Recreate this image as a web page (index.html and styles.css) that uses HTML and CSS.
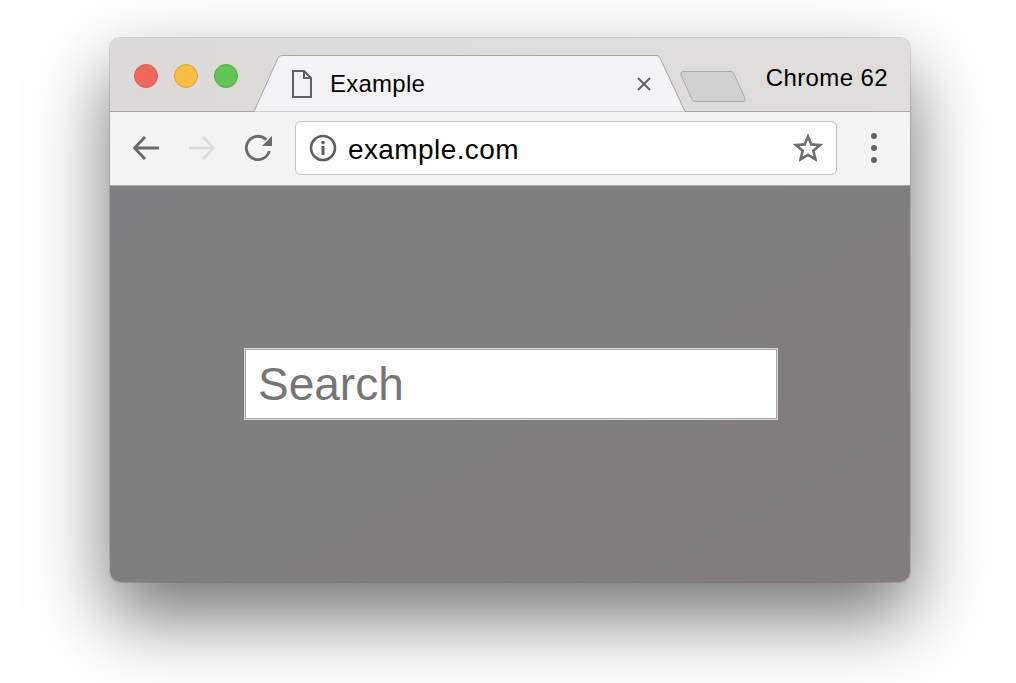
FILE: index.html
```html
<!DOCTYPE html>
<html>
<head>
    <title>Example</title>
    <link rel="stylesheet" href="styles.css">
</head>

<body>
    <div class="browserWindow">

        <div class="tabStrip">
            <div class="lights">
                <span class="light red"></span>
                <span class="light yellow"></span>
                <span class="light green"></span>
            </div>

            <div class="tab">
                <svg class="tabShape" width="432" height="57" viewBox="0 0 432 57">
                    <path d="M0 56.5 L24 3 Q25 0.5 28 0.5 L403 0.5 Q405 0.5 406 3 L431 56.5 H432" fill="#f3f3f5" stroke="#a6a6a6"/>
                </svg>
                <svg class="fileIcon" width="22" height="28" viewBox="0 0 22 28">
                    <path d="M2 1 H13 L20 8 V27 H2 Z M13 1 V8 H20" fill="none" stroke="#5f6064" stroke-width="2"/>
                </svg>
                <span class="tabTitle">Example</span>
                <svg class="closeIcon" width="16" height="16" viewBox="0 0 16 16">
                    <path d="M2 2 L14 14 M14 2 L2 14" stroke="#5f6064" stroke-width="2"/>
                </svg>
            </div>

            <svg class="newTab" width="66" height="31" viewBox="0 0 66 31">
                <path d="M3 0.5 H51 Q53 0.5 54 3 L65 27 Q66 30.5 63 30.5 H15 Q13 30.5 12 28.5 L1 4 Q0 0.5 3 0.5 Z" fill="#d2d1d1" stroke="#aaaaaa"/>
            </svg>

            <span class="versionLabel">Chrome 62</span>
        </div>

        <div class="toolbar">
            <div class="navButton">
                <svg width="28" height="26" viewBox="0 0 28 26">
                    <path d="M27 13 H3 M13 2 L2.5 13 L13 24" fill="none" stroke="#6a6a6a" stroke-width="2.8"/>
                </svg>
            </div>
            <div class="navButton">
                <svg width="28" height="26" viewBox="0 0 28 26">
                    <path d="M1 13 H25 M15 2 L25.5 13 L15 24" fill="none" stroke="#dcdcdc" stroke-width="2.8"/>
                </svg>
            </div>
            <div class="navButton">
                <svg width="28" height="28" viewBox="0 0 28 28">
                    <path d="M22.3 5.7 A11.7 11.7 0 1 0 25.3 17" fill="none" stroke="#6a6a6a" stroke-width="2.8"/>
                    <path d="M28 2 V12 H18 Z" fill="#6a6a6a"/>
                </svg>
            </div>

            <div class="addressBar">
                <svg class="infoIcon" width="28" height="28" viewBox="0 0 28 28">
                    <circle cx="14" cy="14" r="12" fill="none" stroke="#606060" stroke-width="2.6"/>
                    <path d="M14 12 V21" stroke="#606060" stroke-width="3"/>
                    <circle cx="14" cy="8.5" r="1.8" fill="#606060"/>
                </svg>
                <span class="url">example.com</span>
                <svg class="starIcon" width="30" height="30" viewBox="0 0 30 30">
                    <path d="M15 3.5 L18.3 11.4 L27 12.1 L20.4 17.8 L22.4 26.3 L15 21.8 L7.6 26.3 L9.6 17.8 L3 12.1 L11.7 11.4 Z" fill="none" stroke="#6e6e6e" stroke-width="2.6"/>
                </svg>
            </div>

            <div class="menuButton">
                <span class="menuDot"></span>
                <span class="menuDot"></span>
                <span class="menuDot"></span>
            </div>
        </div>

        <div class="pageContent">
            <input class="searchBox" type="text" placeholder="Search">
        </div>

    </div>
</body>

</html>
```

FILE: styles.css
```css
html, body {
    height: 100%;
}

body {
    margin: 0;
    padding: 38px 0 0 110px;
    box-sizing: border-box;
    overflow: hidden;
    background-color: #fff;
    font-family: "Liberation Sans", Arial, sans-serif;
    color: #000;
}

.browserWindow {
    width: 800px;
    height: 544px;
    border-radius: 10px;
    overflow: hidden;
    display: flex;
    flex-direction: column;
    box-shadow: 0 34px 76px 0 rgba(0, 0, 0, 0.56), 0 0 0 1px rgba(0, 0, 0, 0.12);
}

.tabStrip {
    height: 73px;
    flex: none;
    display: flex;
    align-items: flex-end;
    background: linear-gradient(90deg, #dcdad9, #e0dedb);
    border-top: 1px solid #bdbdbd;
    border-bottom: 1px solid #a6a6a6;
    margin-top: -1px;
}

.lights {
    display: flex;
    gap: 16px;
    align-self: center;
    padding: 2px 0 0 24px;
}

.light {
    width: 22px;
    height: 22px;
    border-radius: 50%;
    border: 1px solid;
}

.red {
    background-color: #f0685d;
    border-color: #dd5a50;
}

.yellow {
    background-color: #f7bd45;
    border-color: #dea63c;
}

.green {
    background-color: #5fc553;
    border-color: #51ac47;
}

.tab {
    position: relative;
    width: 432px;
    height: 57px;
    margin-left: 16px;
    margin-bottom: -1px;
    display: flex;
    align-items: center;
}

.tabShape {
    position: absolute;
    left: 0;
    top: 0;
}

.fileIcon {
    position: relative;
    margin-left: 37px;
}

.tabTitle {
    position: relative;
    margin-left: 17px;
    font-size: 24px;
    letter-spacing: 0.25px;
}

.closeIcon {
    position: relative;
    margin-left: auto;
    margin-right: 34px;
}

.newTab {
    flex: none;
    margin-left: -6px;
    margin-bottom: 9px;
}

.versionLabel {
    margin-left: auto;
    margin-right: 22px;
    align-self: center;
    padding-top: 6px;
    font-size: 24px;
    letter-spacing: 0.4px;
}

.toolbar {
    height: 73px;
    flex: none;
    display: flex;
    align-items: center;
    padding-left: 8px;
    background-color: #f3f3f4;
    border-bottom: 1px solid #ababab;
}

.navButton {
    width: 56px;
    display: flex;
    justify-content: center;
    margin-top: -2px;
}

.addressBar {
    width: 542px;
    height: 54px;
    box-sizing: border-box;
    margin: -2px 0 0 9px;
    padding: 0 13px;
    display: flex;
    align-items: center;
    background-color: #fff;
    border: 1px solid #c2c2c2;
    border-radius: 6px;
}

.url {
    margin-left: 11px;
    padding-top: 4px;
    font-size: 28px;
    letter-spacing: 0.4px;
}

.starIcon {
    margin-left: auto;
}

.menuButton {
    flex: 1;
    display: flex;
    flex-direction: column;
    align-items: center;
    gap: 6px;
    margin-top: -2px;
}

.menuDot {
    width: 6px;
    height: 6px;
    border-radius: 50%;
    background-color: #646464;
}

.pageContent {
    flex: 1;
    display: flex;
    align-items: center;
    justify-content: center;
    padding-left: 2px;
    background: linear-gradient(150deg, #7e7f80 0%, #7f7f7f 45%, #837d7b 100%);
}

.searchBox {
    width: 534px;
    height: 72px;
    box-sizing: border-box;
    padding: 0 13px;
    border: 1px solid #d8d8d8;
    outline: 1px solid #a9a9a9;
    outline-offset: -2px;
    background-color: #fff;
    font-family: inherit;
    font-size: 46px;
}

.searchBox::placeholder {
    color: #757575;
    opacity: 1;
}
```
